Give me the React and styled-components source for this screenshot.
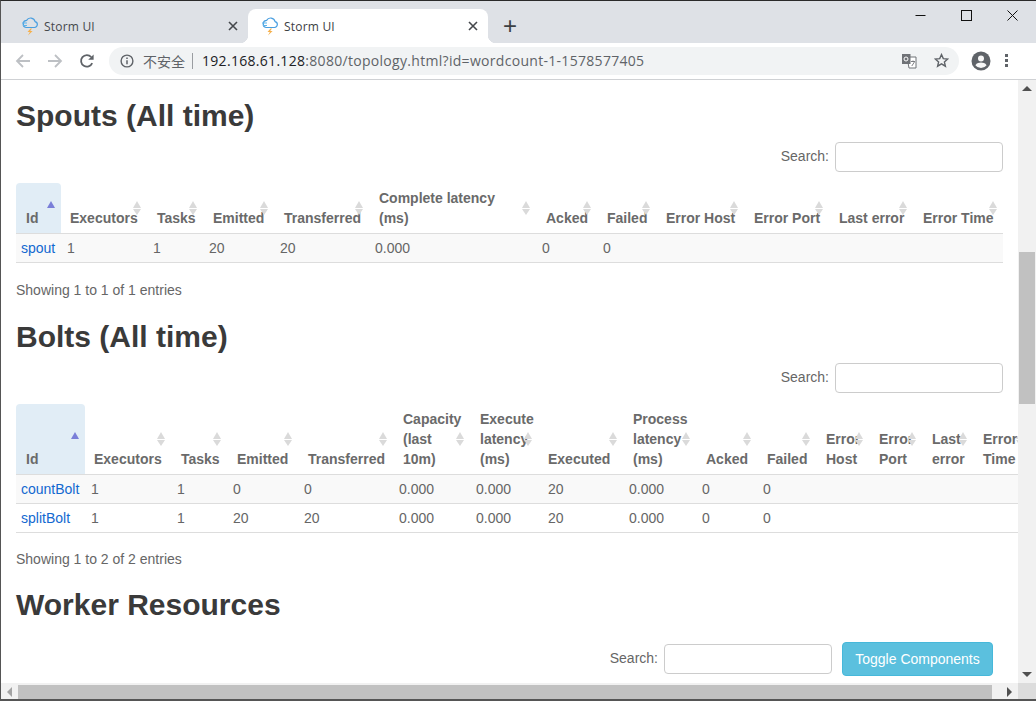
import React from 'react';
import styled, { createGlobalStyle } from 'styled-components';

const GlobalStyle = createGlobalStyle`
  html, body {
    margin: 0;
    padding: 0;
    overflow: hidden;
    background: #fff;
  }
  * {
    box-sizing: border-box;
  }
`;

const spoutColumns = [
  { label: 'Id', width: 45, sorted: true },
  { label: 'Executors', width: 86, headInset: 9 },
  { label: 'Tasks', width: 56 },
  { label: 'Emitted', width: 71 },
  { label: 'Transferred', width: 95 },
  { label: 'Complete latency\n(ms)', width: 167 },
  { label: 'Acked', width: 61 },
  { label: 'Failed', width: 59 },
  { label: 'Error Host', width: 88 },
  { label: 'Error Port', width: 85 },
  { label: 'Last error', width: 84 },
  { label: 'Error Time', width: 90 },
];

const boltColumns = [
  { label: 'Id', width: 69, sorted: true },
  { label: 'Executors', width: 86, headInset: 9 },
  { label: 'Tasks', width: 56 },
  { label: 'Emitted', width: 71 },
  { label: 'Transferred', width: 95 },
  { label: 'Capacity\n(last\n10m)', width: 77 },
  { label: 'Execute\nlatency\n(ms)', width: 68 },
  { label: 'Executed', width: 85, cellInset: 10 },
  { label: 'Process\nlatency\n(ms)', width: 73 },
  { label: 'Acked', width: 61 },
  { label: 'Failed', width: 59 },
  { label: 'Error\nHost', width: 53 },
  { label: 'Error\nPort', width: 53 },
  { label: 'Last\nerror', width: 51 },
  { label: 'Error\nTime', width: 57 },
];

const spoutRows = [['spout', '1', '1', '20', '20', '0.000', '0', '0', '', '', '', '']];

const boltRows = [
  ['countBolt', '1', '1', '0', '0', '0.000', '0.000', '20', '0.000', '0', '0', '', '', '', ''],
  ['splitBolt', '1', '1', '20', '20', '0.000', '0.000', '20', '0.000', '0', '0', '', '', '', ''],
];

const Favicon = () => (
  <svg width="18" height="20" viewBox="0 0 18 20" fill="none">
    <path d="M5 11.5h8.5a3 3 0 0 0 .6-5.9A4.6 4.6 0 0 0 5.6 4.4 3.6 3.6 0 0 0 5 11.5z" stroke="#4a9fe0" strokeWidth="1.2" />
    <path d="M1 7h5M2 9.5h4" stroke="#5fb4ea" strokeWidth="1.1" />
    <path d="M9.5 12.5 6.5 16h2.4L7 19.5l4.6-4.6H9.2l1.8-2.4z" fill="#f5b04c" />
  </svg>
);

const CloseIcon = () => (
  <svg width="10" height="10" viewBox="0 0 10 10">
    <path d="M1 1l8 8M9 1l-8 8" stroke="#45484c" strokeWidth="1.6" />
  </svg>
);

const BackIcon = ({ flip }) => (
  <svg width="16" height="16" viewBox="0 0 16 16" style={flip ? { transform: 'scaleX(-1)' } : undefined}>
    <path d="M15 8H2M8 2 2 8l6 6" fill="none" stroke="#bdc0c4" strokeWidth="1.8" />
  </svg>
);

const ReloadIcon = () => (
  <svg width="16" height="16" viewBox="0 0 16 16">
    <path d="M13.2 10.2A5.8 5.8 0 1 1 12.2 4" fill="none" stroke="#5f6368" strokeWidth="1.8" />
    <path d="M14.6 1.4v5.4H9.2z" fill="#5f6368" />
  </svg>
);

const InfoIcon = () => (
  <svg width="14" height="14" viewBox="0 0 14 14">
    <circle cx="7" cy="7" r="5.9" fill="none" stroke="#5f6368" strokeWidth="1.4" />
    <path d="M7 6.2v4M7 3.6v1.5" stroke="#5f6368" strokeWidth="1.5" />
  </svg>
);

const TranslateIcon = () => (
  <svg width="16" height="16" viewBox="0 0 16 16">
    <path d="M6 4h9v11H8z" fill="#fff" stroke="#6f7276" strokeWidth="1" />
    <rect x="1" y="1" width="8.5" height="10" fill="#6f7276" />
    <circle cx="5" cy="6" r="2" fill="none" stroke="#fff" strokeWidth="1" />
    <path d="M10 8.5h4M12 7.5v1M10.8 13l2.6-4" stroke="#6f7276" strokeWidth="0.9" fill="none" />
  </svg>
);

const StarIcon = () => (
  <svg width="15" height="15" viewBox="0 0 15 15">
    <path d="M7.5 1.6l1.8 4 4.4.4-3.3 2.9 1 4.3-3.9-2.3-3.9 2.3 1-4.3L1.3 6l4.4-.4z" fill="none" stroke="#5f6368" strokeWidth="1.4" />
  </svg>
);

const ProfileIcon = () => (
  <svg width="20" height="20" viewBox="0 0 20 20">
    <circle cx="10" cy="10" r="9.5" fill="#5f6368" />
    <circle cx="10" cy="7.6" r="3" fill="#f7f7f7" />
    <path d="M4.4 14.2c1.4-2 3.6-2.6 5.6-2.6s4.2.6 5.6 2.6a7 7 0 0 1-11.2 0z" fill="#f7f7f7" />
  </svg>
);

const MinimizeIcon = () => (
  <svg width="11" height="11" viewBox="0 0 11 11">
    <path d="M0.5 5.5h10" stroke="#111" strokeWidth="1" />
  </svg>
);

const MaximizeIcon = () => (
  <svg width="11" height="11" viewBox="0 0 11 11">
    <rect x="0.5" y="0.5" width="10" height="10" fill="none" stroke="#111" strokeWidth="1" />
  </svg>
);

const WindowCloseIcon = () => (
  <svg width="11" height="11" viewBox="0 0 11 11">
    <path d="M0.5 0.5l10 10M10.5 0.5l-10 10" stroke="#111" strokeWidth="1" />
  </svg>
);

const Window = styled.div`
  width: 1036px;
  height: 701px;
  display: flex;
  flex-direction: column;
  overflow: hidden;
  border-top: 1px solid #2a2a2a;
  border-left: 1px solid #555;
  border-bottom: 2px solid #555;
  background: #fff;
`;

const TabStrip = styled.div`
  height: 42px;
  flex: none;
  display: flex;
  align-items: flex-end;
  padding-left: 7px;
  background: #dee1e6;
`;

const Tab = styled.div`
  position: relative;
  width: 240px;
  height: 34px;
  display: flex;
  align-items: center;
  gap: 5px;
  padding: 0 10px 0 13px;
  border-radius: 8px 8px 0 0;
  background: ${(p) => (p.$active ? '#fff' : 'transparent')};
  font: 12px "Open Sans", "Liberation Sans", sans-serif;
  letter-spacing: 0.2px;
  color: ${(p) => (p.$active ? '#3c4043' : '#45484c')};

  ${(p) =>
    p.$active &&
    `
    &::before, &::after {
      content: '';
      position: absolute;
      bottom: 0;
      width: 8px;
      height: 8px;
    }
    &::before {
      left: -8px;
      background: radial-gradient(circle at 0 0, transparent 8px, #fff 8.5px);
    }
    &::after {
      right: -8px;
      background: radial-gradient(circle at 100% 0, transparent 8px, #fff 8.5px);
    }
  `}
`;

const TabTitle = styled.span`
  flex: 1;
`;

const NewTab = styled.div`
  width: 44px;
  height: 34px;
  display: flex;
  align-items: center;
  justify-content: center;
  font: 24px "Liberation Sans", sans-serif;
  color: #3c4043;
`;

const WindowControls = styled.div`
  margin-left: auto;
  margin-right: 1px;
  align-self: flex-start;
  display: flex;
`;

const WindowButton = styled.div`
  width: 46px;
  height: 29px;
  display: flex;
  align-items: center;
  justify-content: center;
`;

const Toolbar = styled.div`
  height: 37px;
  flex: none;
  display: flex;
  align-items: center;
  padding: 0 0 1px 0;
  border-bottom: 1px solid #cfd1d4;
  background: #fff;
`;

const NavButton = styled.div`
  width: 32px;
  display: flex;
  justify-content: center;
`;

const NavGroup = styled.div`
  display: flex;
  padding-left: 6px;
  margin-right: 6px;
`;

const Omnibox = styled.div`
  width: 850px;
  height: 28px;
  display: flex;
  align-items: center;
  padding: 0 10px 0 11px;
  border-radius: 14px;
  background: #f1f3f4;
`;

const Insecure = styled.span`
  margin-left: 9px;
  padding-right: 7px;
  border-right: 1px solid #9a9da1;
  font: 14px/16px "Noto Sans CJK SC", sans-serif;
  color: #5f6368;
`;

const Url = styled.span`
  margin-left: 9px;
  flex: 1;
  font: 14px "Open Sans", "Liberation Sans", sans-serif;
  letter-spacing: 0.3px;
  color: #5f6368;

  b {
    font-weight: 400;
    color: #202124;
  }
`;

const OmniIcon = styled.span`
  display: flex;
  margin-left: 17px;
`;

const ToolbarEnd = styled.div`
  display: flex;
  align-items: center;
  margin-left: 12px;
  gap: 14px;
`;

const MenuDots = styled.div`
  width: 3px;
  height: 13px;
  background: radial-gradient(circle at 50% 1.5px, #5f6368 1.5px, transparent 1.8px) 0 0 / 3px 5px repeat-y;
`;

const Viewport = styled.div`
  flex: 1;
  min-height: 0;
  display: flex;
`;

const Page = styled.main`
  flex: 1;
  min-width: 0;
  overflow: hidden;
  padding: 19px 15px 0 15px;
  font: 14px/20px "Liberation Sans", Arial, sans-serif;
  color: #666;
`;

const Heading = styled.h2`
  margin: 0 0 10px;
  font: 700 30px/33px "Liberation Sans", Arial, sans-serif;
  color: #3a3a3a;
`;

const SearchRow = styled.div`
  display: flex;
  align-items: center;
  justify-content: flex-end;
  gap: 6px;
  margin-top: ${(p) => (p.$flush ? '21px' : '0')};
  margin-bottom: ${(p) => (p.$flush ? '0' : '11px')};
  padding-right: ${(p) => (p.$flush ? '10px' : '0')};
`;

const SearchLabel = styled.label`
  margin-bottom: 2px;
`;

const SearchInput = styled.input`
  width: 168px;
  height: 30px;
  padding: 5px 10px;
  border: 1px solid #ccc;
  border-radius: 4px;
  background: #fff;
`;

const ToggleButton = styled.button`
  width: 151px;
  height: 34px;
  margin-left: 4px;
  border: 1px solid #46b8da;
  border-radius: 4px;
  background: #5bc0de;
  color: #fff;
  font: 14px "Liberation Sans", Arial, sans-serif;
`;

const TableClip = styled.div`
  width: 1003px;
`;

const Table = styled.table`
  table-layout: fixed;
  width: ${(p) => p.$width}px;
  border-collapse: separate;
  border-spacing: 0;
`;

const HeadCell = styled.th`
  position: relative;
  padding: 5px 0 5px ${(p) => p.$inset || 10}px;
  border-bottom: 1px solid #ddd;
  border-radius: ${(p) => (p.$sorted ? '4px 4px 0 0' : '0')};
  background: ${(p) => (p.$sorted ? '#e1edf6' : 'transparent')};
  text-align: left;
  vertical-align: bottom;
  white-space: pre;
  font-weight: 700;
  color: #6a6a6a;
`;

const SortArrows = styled.span`
  position: absolute;
  top: 50%;
  right: 5px;
  width: 9px;
  height: 14px;
  transform: translateY(-50%);

  &::before, &::after {
    content: '';
    position: absolute;
    left: 0;
    border-left: 4.5px solid transparent;
    border-right: 4.5px solid transparent;
  }
  &::before {
    top: 0;
    border-bottom: 7px solid ${(p) => (p.$sorted ? '#7a7fd8' : '#dadada')};
  }
  &::after {
    bottom: 0;
    border-top: 6px solid ${(p) => (p.$sorted ? 'transparent' : '#dadada')};
  }
`;

const Row = styled.tr`
  background: ${(p) => (p.$odd ? '#f9f9f9' : '#fff')};
`;

const Cell = styled.td`
  padding: 4px 0 4px ${(p) => p.$inset}px;
  border-bottom: 1px solid #ddd;
  white-space: nowrap;
`;

const Link = styled.a`
  color: #1268d0;
  text-decoration: none;
`;

const TableInfo = styled.div`
  margin: ${(p) => (p.$tight ? '16px 0 19px' : '17px 0 20px')};
`;

const VScrollbar = styled.div`
  width: 18px;
  flex: none;
  position: relative;
  background: #f1f1f1;
`;

const VThumb = styled.div`
  position: absolute;
  top: 172px;
  left: 1px;
  width: 16px;
  height: 152px;
  background: #c1c1c1;
`;

const ScrollArrow = styled.div`
  position: absolute;
  left: 4px;
  ${(p) => (p.$down ? 'bottom: 6px' : 'top: 6px')};
  border-left: 5px solid transparent;
  border-right: 5px solid transparent;
  ${(p) => (p.$down ? 'border-top: 5px solid #505050' : 'border-bottom: 5px solid #505050')};
`;

const HScrollbar = styled.div`
  height: 16px;
  flex: none;
  display: flex;
  align-items: flex-end;
  background: #f1f1f1;
`;

const HArrow = styled.div`
  width: 17px;
  height: 14px;
  flex: none;
  display: flex;
  align-items: center;
  justify-content: center;

  &::after {
    content: '';
    border-top: 5px solid transparent;
    border-bottom: 5px solid transparent;
    ${(p) => (p.$right ? 'border-left: 5px solid #505050' : 'border-right: 5px solid #a3a3a3')};
  }
`;

const HThumb = styled.div`
  width: 974px;
  height: 14px;
  flex: none;
  background: #c1c1c1;
`;

const HTrack = styled.div`
  flex: 1;
`;

const ScrollCorner = styled.div`
  width: 18px;
  height: 16px;
  flex: none;
  background: #dcdcdc;
`;

const DataSection = ({ title, columns, rows, info, tableWidth, tight }) => (
  <section>
    <Heading>{title}</Heading>
    <SearchRow>
      <SearchLabel>Search:</SearchLabel>
      <SearchInput type="text" />
    </SearchRow>
    <TableClip>
      <Table $width={tableWidth}>
        <colgroup>
          {columns.map((c) => (
            <col key={c.label} width={c.width} />
          ))}
        </colgroup>
        <thead>
          <tr>
            {columns.map((c) => (
              <HeadCell key={c.label} $sorted={c.sorted} $inset={c.headInset}>
                {c.label}
                <SortArrows $sorted={c.sorted} />
              </HeadCell>
            ))}
          </tr>
        </thead>
        <tbody>
          {rows.map((row, i) => (
            <Row key={row[0]} $odd={i % 2 === 0}>
              {row.map((value, j) => (
                <Cell key={j} $inset={j === 0 ? 5 : columns[j].cellInset || 6}>
                  {j === 0 ? <Link href="#">{value}</Link> : value}
                </Cell>
              ))}
            </Row>
          ))}
        </tbody>
      </Table>
    </TableClip>
    <TableInfo $tight={tight}>{info}</TableInfo>
  </section>
);

const App = () => {
  return (
    <Window>
      <GlobalStyle />
      <TabStrip>
        <Tab>
          <Favicon />
          <TabTitle>Storm UI</TabTitle>
          <CloseIcon />
        </Tab>
        <Tab $active>
          <Favicon />
          <TabTitle>Storm UI</TabTitle>
          <CloseIcon />
        </Tab>
        <NewTab>+</NewTab>
        <WindowControls>
          <WindowButton><MinimizeIcon /></WindowButton>
          <WindowButton><MaximizeIcon /></WindowButton>
          <WindowButton><WindowCloseIcon /></WindowButton>
        </WindowControls>
      </TabStrip>
      <Toolbar>
        <NavGroup>
          <NavButton><BackIcon /></NavButton>
          <NavButton><BackIcon flip /></NavButton>
          <NavButton><ReloadIcon /></NavButton>
        </NavGroup>
        <Omnibox>
          <InfoIcon />
          <Insecure>不安全</Insecure>
          <Url><b>192.168.61.128</b>:8080/topology.html?id=wordcount-1-1578577405</Url>
          <OmniIcon><TranslateIcon /></OmniIcon>
          <OmniIcon><StarIcon /></OmniIcon>
        </Omnibox>
        <ToolbarEnd>
          <ProfileIcon />
          <MenuDots />
        </ToolbarEnd>
      </Toolbar>
      <Viewport>
        <Page>
          <DataSection
            title="Spouts (All time)"
            columns={spoutColumns}
            rows={spoutRows}
            tableWidth={987}
            info="Showing 1 to 1 of 1 entries"
          />
          <DataSection
            title="Bolts (All time)"
            columns={boltColumns}
            rows={boltRows}
            tableWidth={1010}
            info="Showing 1 to 2 of 2 entries"
            tight
          />
          <Heading>Worker Resources</Heading>
          <SearchRow $flush>
            <SearchLabel>Search:</SearchLabel>
            <SearchInput type="text" />
            <ToggleButton>Toggle Components</ToggleButton>
          </SearchRow>
        </Page>
        <VScrollbar>
          <ScrollArrow />
          <VThumb />
          <ScrollArrow $down />
        </VScrollbar>
      </Viewport>
      <HScrollbar>
        <HArrow />
        <HThumb />
        <HTrack />
        <HArrow $right />
        <ScrollCorner />
      </HScrollbar>
    </Window>
  );
};

export default App;
